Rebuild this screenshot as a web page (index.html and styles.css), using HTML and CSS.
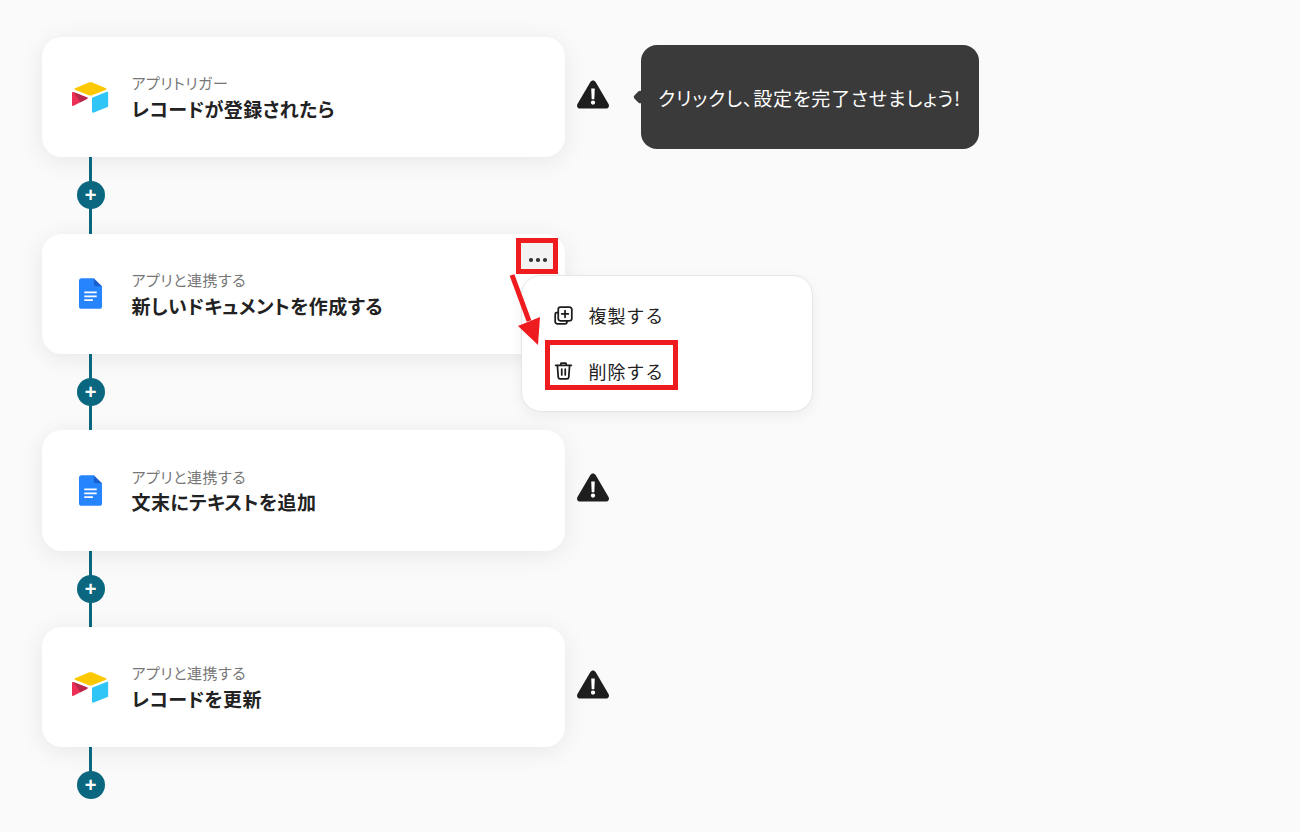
FILE: index.html
```html
<!DOCTYPE html>
<html lang="ja">
<head>
<meta charset="utf-8">
<title>フロー</title>
<link rel="stylesheet" href="styles.css">
<svg class="defs" width="0" height="0" aria-hidden="true">
  <symbol id="airtable" viewBox="0 0 40 34">
    <path fill="#fcc800" d="M18 .6 3.3 6.6c-.8.3-.8 1.500 0 1.800l14.800 5.900c1.200.5 2.600.5 3.800 0l14.800-5.900c.8-.3.8-1.500 0-1.800L22 .6c-1.300-.5-2.700-.5-4 0z"/>
    <path fill="#2fc6f6" d="M21.600 17.600v14.600c0 .7.7 1.200 1.400.9l15.400-6c.4-.2.7-.5.7-1V11.500c0-.7-.7-1.200-1.400-.9l-15.400 6c-.4.2-.7.5-.7 1z"/>
    <path fill="#ed2f55" d="M.9 10.800c-.5-.2-.9.1-.9.7v13.700c0 .6.6 1 1.200.7l15.200-7.900c.5-.3.5-1 0-1.200z"/>
    <path fill="#b9274a" d="M1.600 10.900 16.500 16.800c.5.2.5.9 0 1.200L9 21.800z"/>
  </symbol>
  <symbol id="docs" viewBox="0 0 24 32">
    <path fill="#2684fc" d="M15.500 0h-13C1.100 0 0 1.100 0 2.500v27C0 30.900 1.100 32 2.500 32h19c1.400 0 2.500-1.100 2.500-2.500V8.500l-6-2.500z"/>
    <path fill="#1a5fd0" d="M15.500 0v6c0 1.400 1.100 2.500 2.500 2.500h6z"/>
    <path fill="#fff" d="M5.500 14h13v1.800h-13zM5.500 18h13v1.800h-13zM5.500 22h9v1.800h-9z"/>
  </symbol>
  <symbol id="warn" viewBox="0 0 34 30">
    <path fill="#1e1e1e" d="M14.200 1.700c1.300-2.200 4.300-2.200 5.600 0l13.700 23.500c1.300 2.200-.3 4.800-2.800 4.800H3.300C.8 30-.8 27.400.5 25.200z"/>
    <path fill="#fff" d="M15.100 8.500h3.800l-.5 11.500h-2.800zM17 21.300a2.300 2.300 0 1 1 0 4.600 2.300 2.300 0 0 1 0-4.600z"/>
  </symbol>
</svg>
</head>
<body>
<main class="flow">
  <section class="row">
    <div class="card">
      <svg class="logo logo-air"><use href="#airtable"/></svg>
      <div class="labels"><p class="sub">アプリトリガー</p><p class="title">レコードが登録されたら</p></div>
    </div>
    <svg class="warn"><use href="#warn"/></svg>
    <div class="tip">クリックし、設定を完了させましょう!</div>
  </section>
  <div class="link"><span class="add">+</span></div>
  <section class="row">
    <div class="card">
      <svg class="logo logo-doc"><use href="#docs"/></svg>
      <div class="labels"><p class="sub">アプリと連携する</p><p class="title">新しいドキュメントを作成する</p></div>
      <button class="more"><i></i><i></i><i></i></button>
      <span class="mark mark-more"></span>
      <div class="menu">
        <div class="menu-item">
          <svg class="menu-icon" viewBox="0 0 24 24"><path d="M8.500 2.500h10.500a2.500 2.500 0 0 1 2.500 2.500v10.500a2.500 2.500 0 0 1-2.500 2.500H8.500A2.500 2.500 0 0 1 6 15.500V5a2.500 2.500 0 0 1 2.500-2.500zM13.750 6.500v7.500M10 10.250h7.500M6 8.500H5a2.500 2.500 0 0 0-2.500 2.500V19A2.500 2.500 0 0 0 5 21.500h8.500A2.500 2.500 0 0 0 16 19v-1"/></svg>
          <span>複製する</span>
        </div>
        <div class="menu-item">
          <svg class="menu-icon" viewBox="0 0 24 24"><path d="M3 6h18M8.500 6l.8-2.500h5.400L15.500 6M5 6l1 13.500a2.200 2.200 0 0 0 2.200 2h7.600a2.200 2.200 0 0 0 2.200-2L19 6M10 10.500v6.500M14 10.500v6.500"/></svg>
          <span>削除する</span>
          <span class="mark mark-del"></span>
        </div>
      </div>
      <svg class="arrow" width="50" height="80" viewBox="0 0 50 80"><path class="arrow-line" d="M4 0 21 46"/><path class="arrow-head" d="M30 70 10 51 32 42z"/></svg>
    </div>
  </section>
  <div class="link"><span class="add">+</span></div>
  <section class="row">
    <div class="card">
      <svg class="logo logo-doc"><use href="#docs"/></svg>
      <div class="labels"><p class="sub">アプリと連携する</p><p class="title">文末にテキストを追加</p></div>
    </div>
    <svg class="warn"><use href="#warn"/></svg>
  </section>
  <div class="link"><span class="add">+</span></div>
  <section class="row">
    <div class="card">
      <svg class="logo logo-air"><use href="#airtable"/></svg>
      <div class="labels"><p class="sub">アプリと連携する</p><p class="title">レコードを更新</p></div>
    </div>
    <svg class="warn"><use href="#warn"/></svg>
  </section>
  <div class="link link-last"><span class="add">+</span></div>
</main>
</body>
</html>
```
FILE: styles.css
```css
* { box-sizing: border-box; }
html, body { margin: 0; height: 100%; }
body {
  background: #fafafa;
  color: #222;
  font-family: "Noto Sans CJK JP", "Noto Sans", sans-serif;
  font-feature-settings: "palt" 1;
  overflow: hidden;
}
.defs { position: absolute; }
.flow {
  display: flex;
  flex-direction: column;
  padding: 37px 0 0 42px;
}
.row {
  display: flex;
  align-items: center;
  height: 120.33px;
}
.card {
  position: relative;
  flex: 0 0 523px;
  height: 100%;
  display: flex;
  align-items: center;
  background: #fff;
  border-radius: 20px;
  box-shadow: 0 4px 24px rgba(0, 0, 0, .08);
  padding-left: 30px;
}
.logo { display: block; }
.logo-air { width: 37px; height: 31.5px; margin: 1px 22.5px 0 0; }
.logo-doc { width: 23px; height: 31px; margin: 0 29.5px 0 7px; }
.labels { display: flex; flex-direction: column; }
.sub {
  margin: 1px 0 0;
  font-size: 15px;
  line-height: 20px;
  letter-spacing: .55px;
  color: #777;
}
.title {
  margin: 2.5px 0 0;
  font-size: 19px;
  line-height: 26px;
  font-weight: 700;
  letter-spacing: .4px;
  color: #222;
}
.warn { flex: none; width: 32px; height: 29px; margin: 0 0 6px 11.500px; }
.tip {
  position: relative;
  margin-left: 32px;
  width: 338px;
  height: 104px;
  display: flex;
  align-items: center;
  justify-content: center;
  background: #3a3a3a;
  color: #fff;
  border-radius: 16px;
  font-size: 19px;
  letter-spacing: .85px;
}
.tip::before {
  content: "";
  position: absolute;
  left: -6px;
  top: 47px;
  width: 10px;
  height: 10px;
  background: #3a3a3a;
  border-radius: 2px;
  transform: rotate(45deg);
}
.link {
  position: relative;
  height: 76.33px;
  width: 97px;
  display: flex;
  align-items: center;
  justify-content: center;
}
.link::before {
  content: "";
  position: absolute;
  left: 47px;
  top: 0;
  bottom: 0;
  width: 3px;
  background: #0b677f;
}
.link-last::before { bottom: 50%; }
.add {
  position: relative;
  width: 28px;
  height: 28px;
  border-radius: 50%;
  background: #0b677f;
  color: #fff;
  font-family: "Liberation Sans", sans-serif;
  font-weight: 700;
  font-size: 20px;
  line-height: 28px;
  text-align: center;
}
.more {
  position: absolute;
  top: 9px;
  right: 9px;
  width: 36px;
  height: 30px;
  border: 0;
  padding: 5px 0 0;
  background: #f2f2f2;
  border-radius: 4px;
  display: flex;
  align-items: center;
  justify-content: center;
  gap: 3.500px;
}
.more i { width: 3.500px; height: 3.500px; background: #333; border-radius: 50%; }
.mark { position: absolute; border: 5px solid #ee1c1f; pointer-events: none; }
.mark-more { left: 474px; top: 4px; width: 42px; height: 36px; }
.arrow { position: absolute; left: 466px; top: 41px; overflow: visible; z-index: 3; }
.arrow-line { stroke: #ee1c1f; stroke-width: 5; fill: none; }
.arrow-head { fill: #ee1c1f; }
.menu {
  position: absolute;
  left: 479px;
  top: 41px;
  width: 292px;
  height: 137px;
  padding: 12px 0;
  background: #fff;
  border: 1px solid #e6e6e6;
  border-radius: 20px;
  box-shadow: 0 4px 14px rgba(0, 0, 0, .06);
  display: flex;
  flex-direction: column;
  z-index: 2;
}
.menu-item {
  position: relative;
  flex: 1;
  display: flex;
  align-items: center;
  gap: 15px;
  padding-left: 30.500px;
  font-size: 18px;
  letter-spacing: .9px;
  color: #222;
  font-feature-settings: "palt" 0;
}
.menu-icon {
  width: 21px;
  height: 21px;
  fill: none;
  stroke: #1c1c1c;
  stroke-width: 2;
  stroke-linecap: round;
  stroke-linejoin: round;
}
.mark-del { left: 23px; top: -3px; width: 133px; height: 50px; }
```
